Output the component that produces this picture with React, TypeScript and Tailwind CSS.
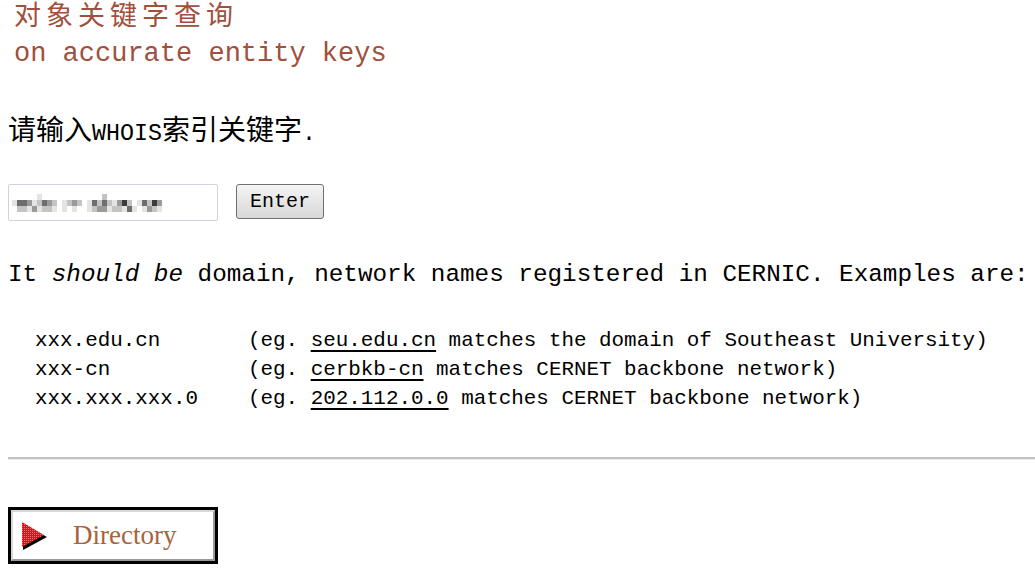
const mono = "font-['Liberation_Mono','Noto_Sans_CJK_SC',monospace]";
const cjk = "font-['Noto_Sans_CJK_SC','Liberation_Sans',sans-serif]";

// pixelated (censored) value inside the input
const mosaic = [
  "00000100000000000020000000000000",
  "14431243201232014242135201425300",
  "02213122101010012331221410132100",
];
const shades: Record<string, string> = {
  "1": "#e4e4e4",
  "2": "#c4c4c4",
  "3": "#9a9a9a",
  "4": "#6e6e6e",
  "5": "#3c3c3c",
};

function Mosaic() {
  return (
    <svg width="160" height="18" viewBox="0 0 160 18">
      {mosaic.map((row, r) =>
        row.split("").map((c, i) =>
          c === "0" ? null : (
            <rect key={`${r}-${i}`} x={i * 5} y={r * 6} width="5" height="6" fill={shades[c]} />
          )
        )
      )}
    </svg>
  );
}

const examples = [
  { key: "xxx.edu.cn", link: "seu.edu.cn", rest: "matches the domain of Southeast University)" },
  { key: "xxx-cn", link: "cerbkb-cn", rest: "matches CERNET backbone network)" },
  { key: "xxx.xxx.xxx.0", link: "202.112.0.0", rest: "matches CERNET backbone network)" },
];

export default function App() {
  return (
    <div className="bg-white min-h-[580px] text-black pl-2 overflow-hidden">
      {/* heading */}
      <div className="pl-[6px] text-[#a0503c]">
        <div className={`${cjk} text-[27px] leading-[28px] tracking-[5px]`}>对象关键字查询</div>
        <div className={`${mono} text-[27px] leading-[40px] mt-[6px]`}>on accurate entity keys</div>
      </div>

      <p className={`${cjk} text-[28px] leading-[36px] mt-[36px] whitespace-nowrap`}>
        请输入<span className={`${mono} text-[23.3px]`}>WHOIS</span>索引关键字<span className={`${mono} text-[23.3px]`}>.</span>
      </p>

      <form className="flex items-start gap-[18px] mt-[32px]" onSubmit={(e) => e.preventDefault()}>
        <div className="w-[210px] h-[37px] border border-[#cfd4dc] rounded-[2px] bg-white flex items-center pl-[3px]">
          <Mosaic />
        </div>
        <button
          type="button"
          className={`${mono} w-[88px] h-[35px] border border-[#707070] rounded-[3px] bg-gradient-to-b from-[#f4f4f4] to-[#d8d8d8] text-[20px] leading-none`}
        >
          Enter
        </button>
      </form>

      <p className={`${mono} text-[24.3px] leading-[30px] mt-[39px] whitespace-nowrap`}>
        It <i>should be</i> domain, network names registered in CERNIC. Examples are:
      </p>

      <div className={`${mono} text-[20.9px] leading-[29px] mt-[36px] pl-[27px] grid grid-cols-[213px_1fr]`}>
        {examples.map((ex) => (
          <div key={ex.key} className="contents">
            <span>{ex.key}</span>
            <span className="whitespace-nowrap">
              (eg. <a href="#" className="underline underline-offset-[4px]">{ex.link}</a> {ex.rest}
            </span>
          </div>
        ))}
      </div>

      <hr className="mt-[44px] border-0 h-[3px] bg-[#c4c4c4] border-b border-b-[#e8e8e8]" />

      <a
        href="#"
        className="mt-[47px] block w-[210px] h-[57px] border-[3px] border-black"
      >
        <div className="h-full border-2 border-t-[#d8d8d8] border-l-[#d8d8d8] border-r-[#9a9a9a] border-b-[#9a9a9a] bg-white flex items-center">
          <svg width="30" height="32" viewBox="0 0 30 32" className="ml-[7px] shrink-0">
            <defs>
              <pattern id="dots" width="2" height="2" patternUnits="userSpaceOnUse">
                <rect width="2" height="2" fill="#e0101a" />
                <rect width="1" height="1" fill="#ff7070" />
              </pattern>
            </defs>
            <polygon points="3,4 27,17 3,30" fill="#000" />
            <polygon points="2,2 24,15 2,27" fill="url(#dots)" />
          </svg>
          <span className="ml-[23px] font-['Liberation_Serif',serif] text-[27px] text-[#a5643c] leading-none">
            Directory
          </span>
        </div>
      </a>
    </div>
  );
}
